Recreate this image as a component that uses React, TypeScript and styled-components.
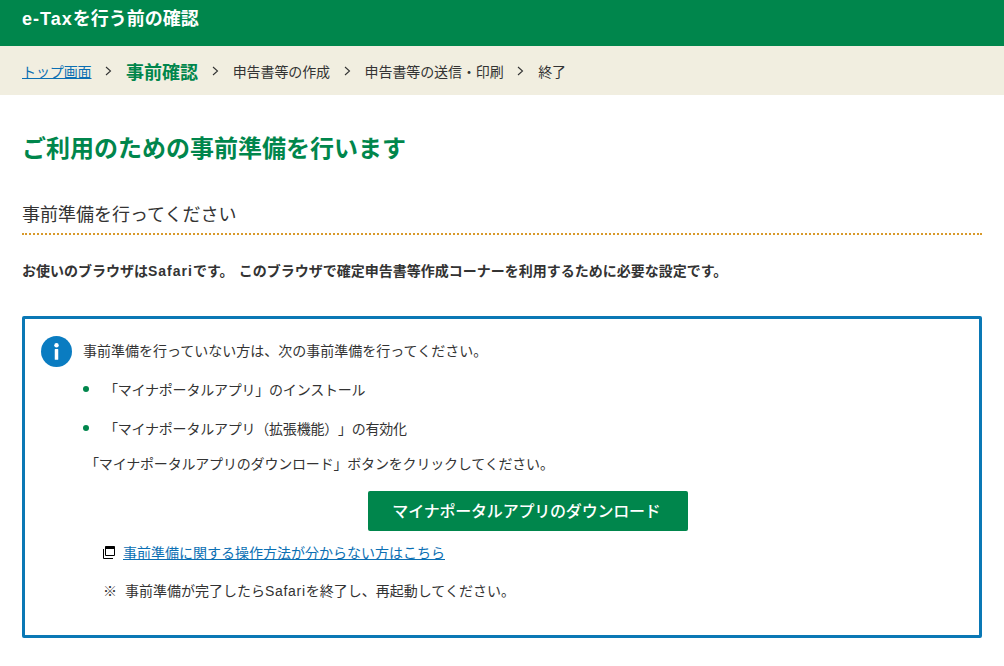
import React from "react";
import styled, { createGlobalStyle } from "styled-components";

const GlobalStyle = createGlobalStyle`
  html, body {
    margin: 0;
    padding: 0;
    background: #fff;
  }
  body {
    font-family: "Noto Sans CJK JP", "Noto Sans", sans-serif;
    color: #333;
    overflow: hidden;
    text-spacing-trim: space-all;
  }
`;

const Page = styled.div`
  width: 1004px;
  height: 666px;
  overflow: hidden;
`;

const Header = styled.header`
  height: 46px;
  background: #00864c;
  color: #fff;
  padding: 4px 22px 0;
  box-sizing: border-box;
`;

const HeaderTitle = styled.h1`
  margin: 0;
  font-size: 18px;
  line-height: 26px;
  font-weight: 700;
`;

const Latin = styled.span<{ $spacing: number }>`
  font-family: "Liberation Sans", sans-serif;
  letter-spacing: ${(p) => p.$spacing}px;
`;

const Steps = styled.ol`
  display: flex;
  align-items: center;
  height: 49px;
  margin: 0;
  padding: 0 22px;
  list-style: none;
  background: #f1eee0;
  font-size: 14px;
`;

const Step = styled.li<{ $current?: boolean }>`
  font-size: ${(p) => (p.$current ? "18px" : "14px")};
  font-weight: ${(p) => (p.$current ? 700 : 400)};
  color: ${(p) => (p.$current ? "#00864c" : "#333")};
  letter-spacing: ${(p) => (p.$current ? "0" : "-0.1px")};
`;

const Chevron = styled.li`
  display: flex;
  align-items: center;
  justify-content: center;
  width: 34.6px;
  color: #333;
`;

const TextLink = styled.a`
  color: #0b6fb3;
  text-decoration: underline;
`;

const Main = styled.main`
  padding: 34px 22px 0;
`;

const PageTitle = styled.h2`
  margin: 0;
  font-size: 24px;
  line-height: 36px;
  font-weight: 700;
  color: #00864c;
`;

const SectionTitle = styled.h3`
  margin: 34px 0 0;
  padding-bottom: 6px;
  font-size: 18px;
  line-height: 28px;
  font-weight: 400;
  color: #333;
  border-bottom: 2px dotted #d89a2b;
`;

const Lead = styled.p`
  margin: 25px 0 0;
  font-size: 14px;
  line-height: 20px;
  font-weight: 700;
  word-spacing: 2px;
`;

const InfoBox = styled.section`
  box-sizing: border-box;
  height: 322px;
  margin-top: 35px;
  padding: 17px 16px 0;
  border: 3px solid #0a78b5;
  border-radius: 2px;
  display: grid;
  grid-template-columns: 42px 1fr;
  align-content: start;
`;

const BoxBody = styled.div`
  font-size: 14px;
  line-height: 22px;
`;

const Line = styled.p`
  margin: 0;
  padding-top: 3px;
`;

const Bullets = styled.ul`
  margin: 17px 0 0;
  padding: 0;
  list-style: none;
  display: flex;
  flex-direction: column;
  gap: 17px;
  letter-spacing: -0.22px;
`;

const Bullet = styled.li`
  display: flex;
  align-items: center;
  &::before {
    content: "";
    width: 6px;
    height: 6px;
    border-radius: 50%;
    background: #00864c;
    margin-right: 15px;
  }
`;

const Instruction = styled.p`
  margin: 13px 0 0 2px;
  letter-spacing: -0.18px;
`;

const ButtonRow = styled.div`
  display: flex;
  justify-content: center;
  margin: 17px 0 0 9px;
`;

const PrimaryButton = styled.button`
  width: 320px;
  height: 40px;
  padding: 0 2px 2px 0;
  border: 0;
  border-radius: 2px;
  background: #00864c;
  color: #fff;
  font-family: inherit;
  font-size: 16px;
  font-weight: 500;
  letter-spacing: -0.2px;
`;

const HelpRow = styled.div`
  display: flex;
  align-items: center;
  gap: 8px;
  margin: 10px 0 0 20px;
  svg {
    margin-top: 1px;
  }
`;

const Note = styled.p`
  display: flex;
  gap: 8px;
  margin: 16px 0 0 20px;
`;

function InfoIcon() {
  return (
    <svg width="31" height="31" viewBox="0 0 32 32">
      <circle cx="16" cy="16" r="16" fill="#0a7cc1" />
      <circle cx="16" cy="9.5" r="2.3" fill="#fff" />
      <rect x="14.2" y="13.5" width="3.6" height="11" rx="0.6" fill="#fff" />
    </svg>
  );
}

function WindowIcon() {
  return (
    <svg width="12" height="13" viewBox="0 0 12 13" fill="none">
      <path d="M2.5 .5h9v9h-9z" stroke="#000" strokeWidth="1" />
      <path d="M2.5 .5h9v2.5h-9z" fill="#000" />
      <path d="M.5 3v9.5h9.5" stroke="#000" strokeWidth="1" />
    </svg>
  );
}

function ChevronIcon() {
  return (
    <svg width="7" height="10" viewBox="0 0 7 10" fill="none">
      <path d="M1 1l4.5 4L1 9" stroke="#333" strokeWidth="1.1" />
    </svg>
  );
}

export default function App() {
  return (
    <Page>
      <GlobalStyle />
      <Header>
        <HeaderTitle>
          <Latin $spacing={1}>e-Tax</Latin>を行う前の確認
        </HeaderTitle>
      </Header>
      <Steps>
        <Step>
          <TextLink href="#">トップ画面</TextLink>
        </Step>
        <Chevron><ChevronIcon /></Chevron>
        <Step $current>事前確認</Step>
        <Chevron><ChevronIcon /></Chevron>
        <Step>申告書等の作成</Step>
        <Chevron><ChevronIcon /></Chevron>
        <Step>申告書等の送信・印刷</Step>
        <Chevron><ChevronIcon /></Chevron>
        <Step>終了</Step>
      </Steps>
      <Main>
        <PageTitle>ご利用のための事前準備を行います</PageTitle>
        <SectionTitle>事前準備を行ってください</SectionTitle>
        <Lead>
          お使いのブラウザは<Latin $spacing={1}>Safari</Latin>です。 このブラウザで確定申告書等作成コーナーを利用するために必要な設定です。
        </Lead>
        <InfoBox>
          <InfoIcon />
          <BoxBody>
            <Line>事前準備を行っていない方は、次の事前準備を行ってください。</Line>
            <Bullets>
              <Bullet>「マイナポータルアプリ」のインストール</Bullet>
              <Bullet>「マイナポータルアプリ（拡張機能）」の有効化</Bullet>
            </Bullets>
            <Instruction>「マイナポータルアプリのダウンロード」ボタンをクリックしてください。</Instruction>
            <ButtonRow>
              <PrimaryButton>マイナポータルアプリのダウンロード</PrimaryButton>
            </ButtonRow>
            <HelpRow>
              <WindowIcon />
              <TextLink href="#">事前準備に関する操作方法が分からない方はこちら</TextLink>
            </HelpRow>
            <Note>
              <span>※</span>
              <span>
                事前準備が完了したら<Latin $spacing={0.7}>Safari</Latin>を終了し、再起動してください。
              </span>
            </Note>
          </BoxBody>
        </InfoBox>
      </Main>
    </Page>
  );
}
